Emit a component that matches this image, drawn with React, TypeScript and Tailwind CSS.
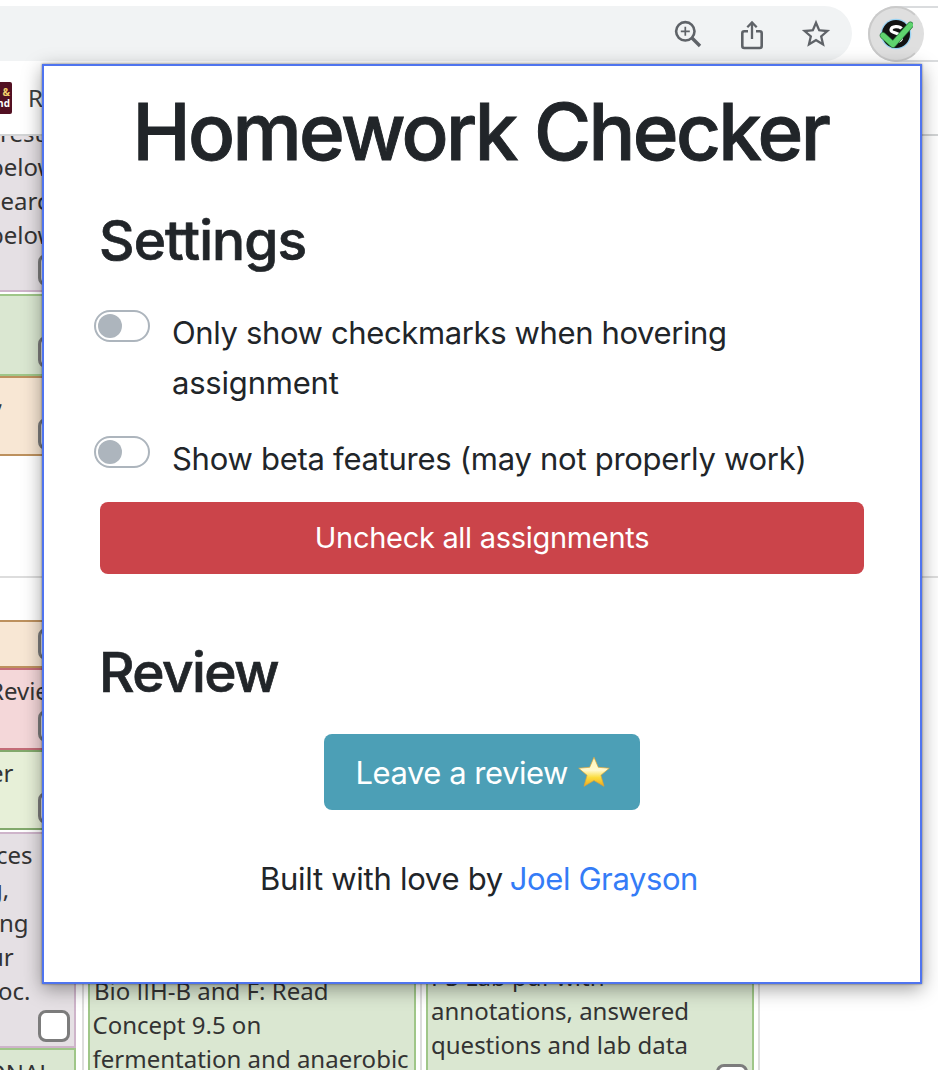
import React, { useState } from "react";
import { MdStarBorder } from "react-icons/md";

function ZoomInIcon() {
  return (
    <svg width="28" height="28" viewBox="0 0 28 28" fill="none" stroke="#5f6368">
      <circle cx="11.3" cy="11.3" r="9.2" strokeWidth="2.6" />
      <path d="M18 18L26 26" strokeWidth="3.4" />
      <path d="M11.3 6.8V15.8M6.8 11.3H15.8" strokeWidth="1.7" />
    </svg>
  );
}

function ShareIcon() {
  return (
    <svg width="24" height="30" viewBox="0 0 24 30" fill="none" stroke="#5f6368" strokeWidth="2.6">
      <path d="M8 11.3H4.3a2 2 0 0 0-2 2V26a2 2 0 0 0 2 2H19.7a2 2 0 0 0 2-2V13.3a2 2 0 0 0-2-2H16" />
      <path d="M12 19V2.5M7.3 7.2L12 2.5L16.700 7.2" strokeWidth="2.3" />
    </svg>
  );
}

function ExtensionIcon() {
  return (
    <svg width="34" height="34" viewBox="0 0 34 34" fill="none">
      <circle cx="17" cy="17" r="15.300" fill="#9bd3f3" />
      <circle cx="17" cy="17" r="14" fill="#121212" />
      <path
        d="M22.500 11.500C20.500 8.800 12.500 8.600 12 12.800C11.700 16.500 22 15.500 22.500 20.500C22.600 24 18 25.500 14.500 24"
        stroke="#fff"
        strokeWidth="3.200"
      />
      <path d="M4 18.500L14 27.500L31.500 8" stroke="#27743b" strokeWidth="6.400" strokeLinecap="round" strokeLinejoin="round" />
      <path d="M4 18.500L14 27.500L31.500 8" stroke="#5fd36e" strokeWidth="5.200" strokeLinecap="round" strokeLinejoin="round" />
    </svg>
  );
}

function GoldStar() {
  return (
    <svg width="32" height="32" viewBox="0 0 32 32">
      <defs>
        <linearGradient id="gold" x1="0" y1="0" x2="0" y2="1">
          <stop offset="0" stopColor="#fff6b8" />
          <stop offset="0.450" stopColor="#fff9cf" />
          <stop offset="0.700" stopColor="#fbdc3c" />
          <stop offset="1" stopColor="#f0a81c" />
        </linearGradient>
      </defs>
      <path
        d="M16 1.200L20.300 11.300L31.300 12.200L22.900 19.300L26 30.300L16 24.500L6 30.300L9.100 19.300L0.700 12.200L11.700 11.300Z"
        fill="url(#gold)"
        stroke="#e0a536"
        strokeWidth="0.700"
        strokeLinejoin="round"
      />
    </svg>
  );
}

function TaskBox({ className = "" }: { className?: string }) {
  return <span className={`block h-8 w-8 shrink-0 self-end rounded-[8px] border-[3px] border-[#7c7c7c] bg-white ${className}`} />;
}

function Toggle() {
  const [on, setOn] = useState(false);
  return (
    <button
      type="button"
      role="switch"
      aria-checked={on}
      onClick={() => setOn(!on)}
      className={`mt-0.5 flex h-8 w-14 shrink-0 items-center rounded-full border-2 border-[#adb5bd] bg-white px-0.5 ${on ? "justify-end" : "justify-start"}`}
    >
      <span className="h-6 w-6 rounded-full bg-[#adb5bd]" />
    </button>
  );
}

function Toolbar() {
  return (
    <div className="flex h-[62px] shrink-0 justify-between pt-1.5">
      <div className="flex h-[55px] w-[852px] items-start justify-end rounded-r-full bg-[#f1f3f4]">
        <div className="mr-[38px] mt-3.5">
          <ZoomInIcon />
        </div>
        <div className="mr-[35px] mt-[14px]">
          <ShareIcon />
        </div>
        <MdStarBorder className="mr-[19px] mt-[11px] text-[#5f6368]" size={34} />
      </div>
      <div className="flex h-14 w-[70px] rounded-l-full border-y-2 border-l-2 border-[#dadcde]">
        <div className="-ml-0.5 -mt-0.5 flex h-14 w-14 items-center justify-center rounded-full border-2 border-[#cacaca] border-r-[#dfdfdf] bg-[#dfdfdf]">
          <ExtensionIcon />
        </div>
      </div>
    </div>
  );
}

function BookmarksBar() {
  return (
    <div className="flex h-[74px] shrink-0 items-start border-b-2 border-[#d2d4d5] pt-5">
      <div className="flex h-8 w-3 flex-col items-end justify-center overflow-hidden rounded-r-[2px] bg-[#521022] pr-0.5 font-['Open_Sans',sans-serif] text-[10px] font-bold leading-[11px]">
        <span className="whitespace-nowrap text-[#f3cf6b]">&amp;</span>
        <span className="text-white">nd</span>
      </div>
      <span className="-mt-px ml-4 text-[#3c4043]">Resources</span>
    </div>
  );
}

function Page() {
  return (
    <div className="flex h-full flex-col whitespace-nowrap font-['Noto_Sans',sans-serif] text-[24px] leading-[34px] text-[#333]">
      <Toolbar />
      <BookmarksBar />
      <div className="flex h-[442px] shrink-0 flex-col border-b-2 border-[#dddddd]">
        <div className="flex h-[156px] w-[76px] flex-col justify-between overflow-hidden border-b-2 border-r-2 border-[#ceb4ca] bg-[#e5e0e4]">
          <div className="-mt-5">
            <p>results</p>
            <p className="-ml-[11px]">below</p>
            <p className="-ml-[11px]">search</p>
            <p className="-ml-[11px]">below</p>
          </div>
          <TaskBox className="-mt-4 mb-1 mr-1" />
        </div>
        <div className="mt-0.5 flex h-[82px] w-[76px] flex-col justify-end border-y-2 border-r-2 border-[#9fc688] bg-[#dae7d1]">
          <TaskBox className="mb-1.5 mr-1" />
        </div>
        <div className="flex h-20 w-[76px] flex-col justify-between border-y-2 border-r-2 border-[#bd915e] bg-[#f8e7d4]">
          <p className="-ml-[3px] pt-[3px]">,</p>
          <TaskBox className="mb-1 mr-1" />
        </div>
      </div>
      <div className="flex h-[492px] shrink-0">
        <div className="flex w-[84px] flex-col overflow-hidden border-r-2 border-[#dddddd] pt-[42px]">
          <div className="flex h-12 w-[76px] shrink-0 flex-col justify-end border-y-2 border-r-2 border-[#bd915e] bg-[#f8e7d4]">
            <TaskBox className="mb-1.5 mr-1" />
          </div>
          <div className="flex h-[82px] w-[76px] shrink-0 flex-col justify-between border-y-2 border-r-2 border-[#c46c78] bg-[#f4d7d9]">
            <p className="-ml-[11px] pt-1">Review</p>
            <TaskBox className="mb-1.5 mr-1" />
          </div>
          <div className="flex h-20 w-[76px] shrink-0 flex-col justify-between border-y-2 border-r-2 border-[#82a96c] bg-[#e7f0d8]">
            <p className="-ml-[10px] pt-1">er</p>
            <TaskBox className="mb-1 mr-1" />
          </div>
          <div className="mt-0.5 flex h-[216px] w-[76px] shrink-0 flex-col justify-between border-y-2 border-r-2 border-[#ceb4ca] bg-[#e5e0e4]">
            <div className="pt-1">
              <p className="-ml-[4px]">ces</p>
              <p className="-ml-[12px]">g,</p>
              <p className="-ml-px">ng</p>
              <p className="-ml-[11px]">ur</p>
              <p className="-ml-0.5">oc.</p>
            </div>
            <TaskBox className="mb-1 mr-1" />
          </div>
          <div className="h-[60px] w-[76px] shrink-0 border-y-2 border-r-2 border-[#9fc688] bg-[#dae7d1]">
            <p className="-ml-[13px] pt-1.5">ONAL</p>
          </div>
        </div>
        <div className="flex w-[338px] flex-col justify-end overflow-hidden border-r-2 border-[#dddddd] pl-1 pr-1">
          <div className="h-[130px] w-[328px] border-x-2 border-t-2 border-[#9fc688] bg-[#dae7d1] pl-[2.500px] pt-8">
            <p className="pl-[1.500px]">
              Bio <span className="font-['Open_Sans',sans-serif]">II</span>H-B and F: Read
            </p>
            <p>Concept 9.5 on</p>
            <p>fermentation and anaerobic</p>
          </div>
        </div>
        <div className="flex w-[338px] flex-col justify-end overflow-hidden border-r-2 border-[#dddddd] pl-1">
          <div className="flex h-[130px] w-[328px] justify-between overflow-hidden border-x-2 border-t-2 border-[#9fc688] bg-[#dae7d1] pl-[3px] pt-[18px]">
            <div className="shrink-0">
              <p>PS Lab pdf with</p>
              <p>annotations, answered</p>
              <p>questions and lab data</p>
              <p>and analysis</p>
            </div>
            <TaskBox className="-mb-[26px] mr-1" />
          </div>
        </div>
      </div>
    </div>
  );
}

function Popup() {
  return (
    <section className="absolute left-[42px] top-16 flex h-[920px] w-[880px] flex-col whitespace-nowrap border-2 border-[#4f74ef] bg-white px-14 pt-[18px] font-['Inter',sans-serif] text-[31px] leading-[50px] text-[#212529] shadow-[0_0_2px_rgba(0,0,0,0.500),0_5px_18px_rgba(0,0,0,0.380)]">
      <h1 className="pl-[32.500px] text-[78px] font-medium leading-[96px] tracking-[-2.650px] [-webkit-text-stroke:0.900px_#212529]">Homework Checker</h1>
      <h2 className="-ml-px mt-[26px] text-[55px] font-medium leading-[68px] tracking-[-0.900px] [-webkit-text-stroke:0.700px_#212529]">Settings</h2>
      <div className="-ml-1.5 mt-[34px] flex items-start gap-[22px]">
        <Toggle />
        <p className="tracking-[-0.370px]">
          Only show checkmarks when hovering
          <br />
          <span className="tracking-[-0.200px]">assignment</span>
        </p>
      </div>
      <div className="-ml-1.5 mt-[26px] flex items-start gap-[22px]">
        <Toggle />
        <p className="tracking-[-0.270px]">Show beta features (may not properly work)</p>
      </div>
      <button type="button" className="mt-[18px] h-[72px] rounded-lg bg-[#cb444a] text-[29px] leading-[72px] tracking-[-0.300px] text-white">
        Uncheck all assignments
      </button>
      <h2 className="-ml-px mt-16 text-[55px] font-medium leading-[68px] tracking-[-1.600px] [-webkit-text-stroke:0.700px_#212529]">Review</h2>
      <button type="button" className="mt-7 flex h-[76px] w-[316px] items-center gap-2.5 self-center rounded-lg bg-[#4c9fb6] pl-[31.500px] text-white">
        <span className="pt-0.5 tracking-[-0.470px]">Leave a review</span>
        <GoldStar />
      </button>
      <p className="mt-11 pl-[160px] tracking-[-0.280px]">
        Built with love by <a className="-ml-[1.500px] tracking-[-0.400px] text-[#347cf7]">Joel Grayson</a>
      </p>
    </section>
  );
}

export default function App() {
  return (
    <div className="relative h-[1070px] w-[938px] overflow-hidden bg-white">
      <Page />
      <Popup />
    </div>
  );
}
